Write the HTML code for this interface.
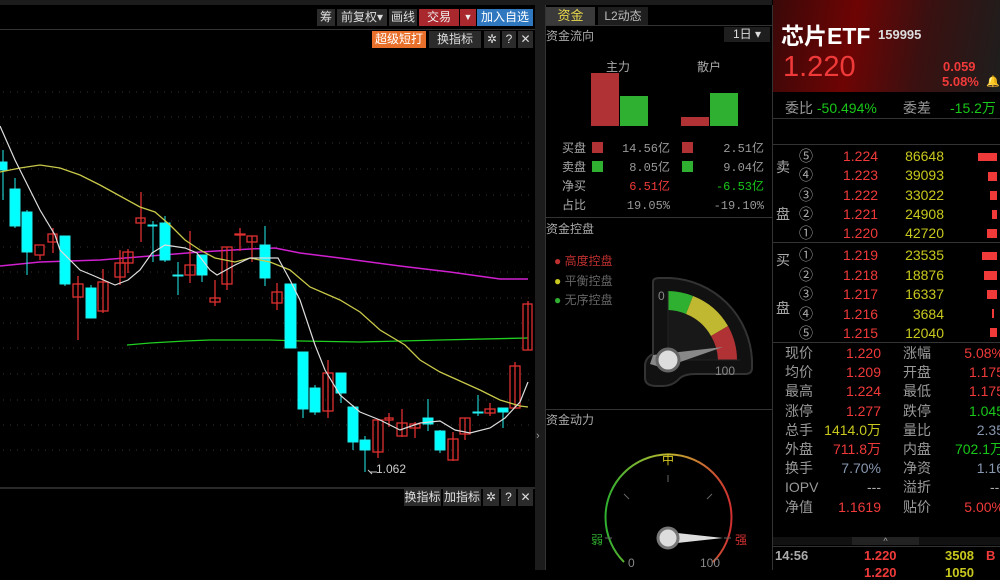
<!DOCTYPE html>
<html><head><meta charset="utf-8"><style>
*{margin:0;padding:0;box-sizing:border-box}
body{width:1000px;height:570px;background:#000;overflow:hidden;position:relative;font-family:"Liberation Sans","Noto Sans CJK SC",sans-serif;color:#bbb;font-size:12px}
.a{position:absolute;white-space:nowrap}
.btn{position:absolute;background:#2b2b2b;color:#ddd;font-size:12px;line-height:17px;height:17px;text-align:center}
.r{color:#f03a3a}.g{color:#19c819}.y{color:#c8c81e}.w{color:#aaa}
.q{position:absolute;font-size:14px;line-height:19px;white-space:nowrap}
</style></head><body>
<div class="a" style="left:0;top:0;width:772px;height:5px;background:#1c1c1c"></div>
<div class="a" style="left:0;top:29px;width:535px;height:1px;background:#333"></div>
<div class="btn" style="left:317px;top:9px;width:18px">筹</div>
<div class="btn" style="left:337px;top:9px;width:50px">前复权▾</div>
<div class="btn" style="left:389px;top:9px;width:28px">画线</div>
<div class="btn" style="left:419px;top:9px;width:40px;background:#a8282e;color:#eee">交易</div>
<div class="btn" style="left:460px;top:9px;width:16px;background:#a8282e;color:#eee;font-size:9px">▼</div>
<div class="btn" style="left:477px;top:9px;width:56px;background:#2f78c0;color:#fff">加入自选</div>
<div class="btn" style="left:372px;top:31px;width:54px;background:#e8702a;color:#fff">超级短打</div>
<div class="btn" style="left:429px;top:31px;width:52px">换指标</div>
<div class="btn" style="left:484px;top:31px;width:16px">✲</div>
<div class="btn" style="left:502px;top:31px;width:14px">?</div>
<div class="btn" style="left:518px;top:31px;width:15px">✕</div>
<div class="a" style="left:535px;top:5px;width:10px;height:565px;background:#1c1c1c"></div>
<div class="a" style="left:536px;top:430px;color:#999;font-size:11px">›</div>
<div class="a" style="left:0;top:487px;width:535px;height:2px;background:#2a2a2a"></div>
<div class="btn" style="left:404px;top:489px;width:37px">换指标</div>
<div class="btn" style="left:443px;top:489px;width:38px">加指标</div>
<div class="btn" style="left:483px;top:489px;width:16px">✲</div>
<div class="btn" style="left:501px;top:489px;width:15px">?</div>
<div class="btn" style="left:518px;top:489px;width:15px">✕</div>

<svg class="a" style="left:0;top:0" width="535" height="570">
<g stroke="#333" stroke-dasharray="1 6" stroke-width="1">
<path d="M3 92H530M3 117H530M3 143H530M3 169H530M3 195H530M3 221H530M3 247H530M3 272H530M3 298H530M3 323H530M3 348H530M3 374H530M3 400H530M3 425H530M3 450H530"/>
</g>
<polyline fill="none" stroke="#d020d0" stroke-width="1.5" points="0,266 40,262 100,260 150,256 200,252 250,249 275,248 300,253 340,258 400,266 450,272 500,279 528,279"/>
<polyline fill="none" stroke="#20d020" stroke-width="1.3" points="127,345 150,343 185,341 210,340 270,340 300,341 360,342 440,340 528,338"/>
<g stroke="#2ee" fill="#0ff">
<path d="M3 150V200M15 178V228M27 210V275M65 236V286M91 285V318M153 221V262M165 216V262M178 262V295M202 275V282M265 226V286M290 284V348M303 352V418M315 385V415M341 393V403M353 405V450M365 436V472M428 399V431M440 430V453M478 395V416M503 412V428"/>
<rect x="0" y="162" width="7" height="8"/><rect x="10" y="189" width="10" height="37"/><rect x="22" y="212" width="10" height="40"/><rect x="60" y="236" width="10" height="48"/><rect x="86" y="288" width="10" height="30"/><rect x="148" y="225" width="9" height="1"/><rect x="160" y="223" width="10" height="37"/><rect x="173" y="275" width="10" height="1"/><rect x="197" y="255" width="10" height="20"/><rect x="260" y="245" width="10" height="33"/><rect x="285" y="284" width="11" height="64"/><rect x="298" y="352" width="10" height="57"/><rect x="310" y="388" width="10" height="24"/><rect x="336" y="373" width="10" height="20"/><rect x="348" y="407" width="10" height="35"/><rect x="360" y="440" width="10" height="10"/><rect x="423" y="418" width="10" height="6"/><rect x="435" y="431" width="10" height="19"/><rect x="473" y="412" width="10" height="1"/><rect x="498" y="408" width="10" height="4"/>
</g>
<g stroke="#e03030" fill="none" stroke-width="1.3">
<path d="M40 255V260M53 228V253M78 276V340M103 269V313M120 250V285M128 249V273M141 192V242M190 231V283M215 280V306M227 247V290M240 228V251M252 236V262M277 283V310M328 360V418M378 420V458M389 413V427M402 409V437M415 422V438M453 432V461M465 418V440M490 403V416M515 362V408M528 301V350"/>
<rect x="35" y="245" width="9" height="10"/><rect x="48" y="234" width="9" height="8"/><rect x="73" y="284" width="10" height="13"/><rect x="98" y="282" width="10" height="29"/><rect x="115" y="263" width="10" height="14"/><rect x="123" y="252" width="10" height="11"/><rect x="136" y="218" width="9" height="5"/><rect x="185" y="265" width="10" height="10"/><rect x="210" y="298" width="10" height="4"/><rect x="222" y="247" width="10" height="37"/><rect x="235" y="234" width="10" height="1"/><rect x="247" y="236" width="10" height="6"/><rect x="272" y="292" width="10" height="11"/><rect x="323" y="373" width="10" height="38"/><rect x="373" y="420" width="10" height="32"/><rect x="385" y="418" width="8" height="2"/><rect x="397" y="423" width="10" height="13"/><rect x="410" y="424" width="10" height="4"/><rect x="448" y="439" width="10" height="21"/><rect x="460" y="418" width="10" height="16"/><rect x="485" y="409" width="10" height="4"/><rect x="510" y="366" width="10" height="42"/><rect x="523" y="304" width="9" height="46"/>
</g>
<polyline fill="none" stroke="#c8c84a" stroke-width="1.3" points="0,172 20,168 40,165 60,168 80,175 100,185 120,196 140,207 155,212 170,225 185,240 200,250 215,258 235,262 250,258 270,262 290,270 310,287 340,300 360,312 380,330 405,345 420,360 440,372 460,381 480,390 500,400 520,406 528,407"/>
<polyline fill="none" stroke="#ddd" stroke-width="1.2" points="0,126 15,160 40,210 55,235 60,250 80,270 92,275 115,285 128,280 140,270 152,253 165,245 185,248 197,253 210,270 217,275 235,265 250,258 270,258 278,258 290,280 300,300 315,345 325,370 340,395 360,412 380,420 400,430 420,423 440,421 455,430 470,433 490,428 505,418 520,402 528,382"/>
<path d="M377 472L370 472 368 470M370 472 372 474" stroke="#ccc" fill="none"/>
<text x="376" y="473" fill="#ccc" font-size="12" font-family="Liberation Sans">1.062</text>
</svg>

<div class="a" style="left:545px;top:5px;width:228px;height:565px;background:#000;border-left:1px solid #333;border-right:1px solid #333"></div>
<div class="a" style="left:546px;top:7px;width:49px;height:18px;background:#3a3a3a;color:#e8d84a;font-size:13px;text-align:center;line-height:18px">资金</div>
<div class="a" style="left:598px;top:7px;width:50px;height:18px;background:#1e1e1e;color:#bbb;font-size:12px;text-align:center;line-height:18px">L2动态</div>
<div class="a" style="left:545px;top:25px;width:228px;height:1px;background:#333"></div>
<div class="a w" style="left:546px;top:27px;font-size:12px">资金流向</div>
<div class="a" style="left:724px;top:27px;width:46px;height:15px;background:#1e1e1e;color:#ddd;line-height:15px;text-align:center">1日 ▾</div>
<div class="a w" style="left:606px;top:58px">主力</div>
<div class="a w" style="left:697px;top:58px">散户</div>
<div class="a" style="left:591px;top:73px;width:28px;height:53px;background:#b03234"></div>
<div class="a" style="left:620px;top:96px;width:28px;height:30px;background:#30b030"></div>
<div class="a" style="left:681px;top:117px;width:28px;height:9px;background:#b03234"></div>
<div class="a" style="left:710px;top:93px;width:28px;height:33px;background:#30b030"></div>
<div class="a w" style="left:562px;top:140px;line-height:19px;font-family:'Liberation Mono','Noto Sans CJK SC',monospace">买盘<br>卖盘<br>净买<br>占比</div>
<div class="a" style="left:592px;top:142px;width:11px;height:11px;background:#b03234"></div>
<div class="a" style="left:592px;top:161px;width:11px;height:11px;background:#30b030"></div>
<div class="a" style="left:682px;top:142px;width:11px;height:11px;background:#b03234"></div>
<div class="a" style="left:682px;top:161px;width:11px;height:11px;background:#30b030"></div>
<div class="a" style="left:610px;top:140px;width:60px;text-align:right;line-height:19px;font-family:'Liberation Mono','Noto Sans CJK SC',monospace;color:#999">14.56亿<br>8.05亿<br><span class="r">6.51亿</span><br>19.05%</div>
<div class="a" style="left:700px;top:140px;width:64px;text-align:right;line-height:19px;font-family:'Liberation Mono','Noto Sans CJK SC',monospace;color:#999">2.51亿<br>9.04亿<br><span class="g">-6.53亿</span><br>-19.10%</div>
<div class="a" style="left:545px;top:217px;width:228px;height:1px;background:#333"></div>
<div class="a w" style="left:546px;top:220px">资金控盘</div>
<div class="a" style="left:554px;top:252px;line-height:19.5px;font-size:12px"><span style="color:#c03030">● 高度控盘</span><br><span style="color:#666"><span class="y">●</span> 平衡控盘</span><br><span style="color:#666"><span style="color:#30b030">●</span> 无序控盘</span></div>
<div class="a" style="left:545px;top:409px;width:228px;height:1px;background:#333"></div>
<div class="a w" style="left:546px;top:411px">资金动力</div>
<svg class="a" style="left:545px;top:218px" width="228" height="352">
<path d="M108 64 Q108 60 114 60 L125 60 A86 86 0 0 1 207 142 L207 150 Q207 156 200 156 L150 156 Q140 156 135 160 Q128 168 118 168 L112 168 Q100 168 100 160 L100 148 Q100 140 108 136Z" fill="#111" stroke="#333" stroke-width="2"/>
<path d="M123 73 A69 69 0 0 1 192 142 L123 142Z" fill="#181818"/>
<path d="M123 73 A69 69 0 0 1 148 78 L141 96 A50 50 0 0 0 123 92Z" fill="#30b030"/>
<path d="M148 78 A69 69 0 0 1 183 108 L166 118 A50 50 0 0 0 141 96Z" fill="#c0b830"/>
<path d="M183 108 A69 69 0 0 1 192 142 L173 142 A50 50 0 0 0 166 118Z" fill="#b03234"/>
<path d="M123 73V142H195" stroke="#222" fill="none"/>
<path d="M118 150 L105 146 L108 137 L178 129 Z" fill="#888"/>
<circle cx="123" cy="142" r="11" fill="#ddd" stroke="#666" stroke-width="3"/>
<text x="113" y="82" fill="#888" font-size="12" font-family="Liberation Sans">0</text>
<text x="170" y="157" fill="#888" font-size="12" font-family="Liberation Sans">100</text>
<defs><linearGradient id="gg" x1="0" x2="1"><stop offset="0" stop-color="#30b030"/><stop offset=".5" stop-color="#c0b830"/><stop offset="1" stop-color="#d03030"/></linearGradient></defs>
<path d="M79 344 A63 63 0 1 1 168 344" fill="none" stroke="url(#gg)" stroke-width="2"/>
<g stroke="#666" stroke-width="1"><path d="M123 257V264M60 320H67M179 320H186M79 276L84 281M167 276L162 281"/></g>
<text x="123" y="246" fill="#d8c820" font-size="12" text-anchor="middle" font-family="Noto Sans CJK SC">中</text>
<text x="46" y="326" fill="#30b030" font-size="12" font-family="Noto Sans CJK SC">弱</text>
<text x="190" y="326" fill="#d03030" font-size="12" font-family="Noto Sans CJK SC">强</text>
<text x="83" y="349" fill="#888" font-size="12" font-family="Liberation Sans">0</text>
<text x="155" y="349" fill="#888" font-size="12" font-family="Liberation Sans">100</text>
<path d="M123 314 L178 320 L123 326Z" fill="#ddd"/>
<circle cx="123" cy="320" r="10" fill="#ddd" stroke="#777" stroke-width="3"/>
</svg>

<div class="a" style="left:773px;top:0;width:227px;height:92px;background:linear-gradient(100deg,#3a0808 0%,#6e0404 35%,#3a1010 65%,#1e1e1e 100%)"></div>
<div class="a" style="left:781px;top:17px;font-size:23px;font-weight:bold;color:#fff">芯片ETF</div>
<div class="a" style="left:878px;top:27px;font-size:13px;font-weight:bold;color:#ddd">159995</div>
<div class="a" style="left:783px;top:51px;font-size:29px;color:#f03a3a">1.220</div>
<div class="a" style="left:943px;top:59px;font-size:13px;font-weight:bold;color:#f03a3a">0.059</div>
<div class="a" style="left:942px;top:74px;font-size:13px;font-weight:bold;color:#f03a3a">5.08%</div>
<div class="a" style="left:986px;top:75px;font-size:11px;color:#888">🔔</div>
<div class="q" style="left:785px;top:99px;color:#999">委比 <span class="g">-50.494%</span></div>
<div class="q" style="left:903px;top:99px;color:#999">委差</div>
<div class="q g" style="left:950px;top:99px">-15.2万</div>
<div class="a" style="left:773px;top:118px;width:227px;height:1px;background:#333"></div>
<div class="a" style="left:773px;top:144px;width:227px;height:1px;background:#333"></div>
<div class="a" style="left:773px;top:242px;width:227px;height:1px;background:#333"></div>
<div class="a" style="left:773px;top:342px;width:227px;height:1px;background:#333"></div>
<div class="q w" style="left:776px;top:158px">卖</div><div class="q w" style="left:776px;top:205px">盘</div>
<div class="q w" style="left:776px;top:251px">买</div><div class="q w" style="left:776px;top:299px">盘</div>
<div class="q w" style="left:799px;top:147px;line-height:19.3px">⑤<br>④<br>③<br>②<br>①</div>
<div class="q w" style="left:799px;top:246px;line-height:19.6px">①<br>②<br>③<br>④<br>⑤</div>
<div class="q r" style="left:843px;top:147px;line-height:19.3px">1.224<br>1.223<br>1.222<br>1.221<br>1.220</div>
<div class="q y" style="left:899px;top:147px;line-height:19.3px;width:45px;text-align:right">86648<br>39093<br>33022<br>24908<br>42720</div>
<div class="q r" style="left:843px;top:246px;line-height:19.6px">1.219<br>1.218<br>1.217<br>1.216<br>1.215</div>
<div class="q y" style="left:899px;top:246px;line-height:19.6px;width:45px;text-align:right">23535<br>18876<br>16337<br>3684<br>12040</div>
<div class="a" style="left:978px;top:153px;width:19px;height:8px;background:#f03a3a"></div>
<div class="a" style="left:988px;top:172px;width:9px;height:9px;background:#f03a3a"></div>
<div class="a" style="left:990px;top:191px;width:7px;height:9px;background:#f03a3a"></div>
<div class="a" style="left:992px;top:210px;width:5px;height:9px;background:#f03a3a"></div>
<div class="a" style="left:987px;top:229px;width:10px;height:9px;background:#f03a3a"></div>
<div class="a" style="left:982px;top:252px;width:15px;height:8px;background:#f03a3a"></div>
<div class="a" style="left:984px;top:271px;width:13px;height:9px;background:#f03a3a"></div>
<div class="a" style="left:987px;top:290px;width:10px;height:9px;background:#f03a3a"></div>
<div class="a" style="left:992px;top:309px;width:2px;height:9px;background:#f03a3a"></div>
<div class="a" style="left:990px;top:328px;width:7px;height:9px;background:#f03a3a"></div>
<div class="q" style="left:785px;top:344px;line-height:19.2px;color:#999">现价<br>均价<br>最高<br>涨停<br>总手<br>外盘<br>换手<br>IOPV<br>净值</div>
<div class="q" style="left:800px;top:344px;line-height:19.2px;width:81px;text-align:right"><span class="r">1.220</span><br><span class="r">1.209</span><br><span class="r">1.224</span><br><span class="r">1.277</span><br><span class="y">1414.0万</span><br><span class="r">711.8万</span><br><span style="color:#8898b0">7.70%</span><br><span class="w">---</span><br><span class="r">1.1619</span></div>
<div class="q" style="left:903px;top:344px;line-height:19.2px;color:#999">涨幅<br>开盘<br>最低<br>跌停<br>量比<br>内盘<br>净资<br>溢折<br>贴价</div>
<div class="q" style="left:940px;top:344px;line-height:19.2px;width:64px;text-align:right"><span class="r">5.08%</span><br><span class="r">1.175</span><br><span class="r">1.175</span><br><span class="g">1.045</span><br><span style="color:#8898b0">2.35</span><br><span class="g">702.1万</span><br><span style="color:#8898b0">1.16</span><br><span class="w">---</span><br><span class="r">5.00%</span></div>
<div class="a" style="left:773px;top:537px;width:227px;height:8px;background:#111"></div>
<div class="a" style="left:852px;top:537px;width:67px;height:8px;background:#222;color:#aaa;font-size:9px;line-height:8px;text-align:center">^</div>
<div class="a" style="left:773px;top:546px;width:227px;height:1px;background:#333"></div>
<div class="a" style="left:775px;top:548px;font-size:13px;font-weight:bold;color:#aaa">14:56</div>
<div class="a r" style="left:864px;top:548px;font-size:13px;font-weight:bold">1.220</div>
<div class="a y" style="left:945px;top:548px;font-size:13px;font-weight:bold">3508</div>
<div class="a r" style="left:986px;top:548px;font-size:13px;font-weight:bold">B</div>
<div class="a r" style="left:864px;top:565px;font-size:13px;font-weight:bold">1.220</div>
<div class="a y" style="left:945px;top:565px;font-size:13px;font-weight:bold">1050</div>
</body></html>
